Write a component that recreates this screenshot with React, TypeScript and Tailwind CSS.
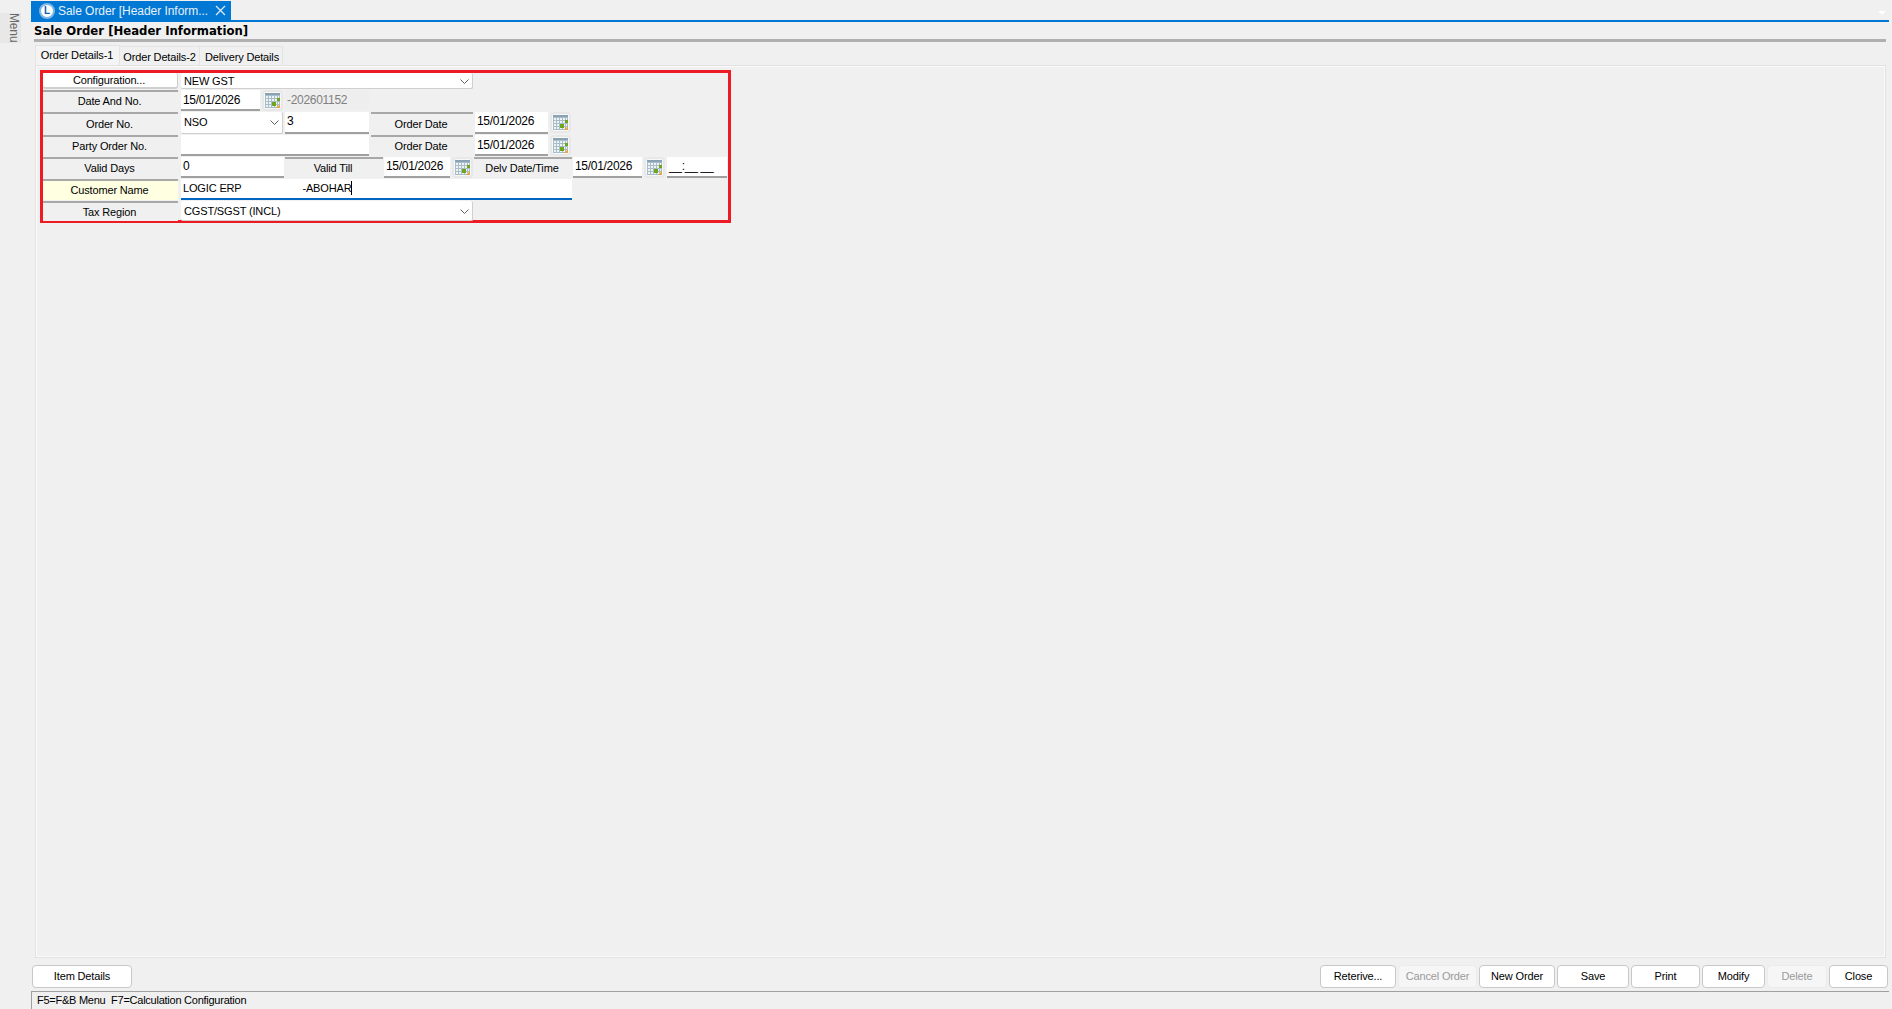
import React from "react";

function CalendarIcon() {
  return (
    <svg width="15" height="15" viewBox="0 0 15 15">
      <rect x="0.5" y="0.5" width="14" height="14" fill="#eef3f6" />
      <rect x="0" y="0" width="15" height="2" fill="#8aa3b2" />
      <path
        d="M0.5 2v13M3.5 2v13M6.5 2v13M9.5 2v13M12.5 2v13M14.5 2v13M0 2.5h15M0 5.5h15M0 8.5h15M0 11.5h15M0 14.5h15"
        stroke="#a9bdc9"
        strokeWidth="1"
        fill="none"
      />
      <rect x="7" y="9" width="4" height="4" fill="#6fa51a" />
      <rect x="12" y="5" width="3" height="3" fill="#6fa51a" />
      <path d="M11 15l4-4v4z" fill="#eda54a" />
    </svg>
  );
}

function CalButton() {
  return (
    <div className="w-[21px] h-[21px] shrink-0 flex items-center justify-center bg-[#f8f8f8] border-2 border-[#e8e8e8] rounded-[4px]">
      <CalendarIcon />
    </div>
  );
}

function Label({ text, w, yellow }: { text: string; w: string; yellow?: boolean }) {
  return (
    <div
      className={`${w} h-full shrink-0 flex items-center justify-center pr-[2px] border-t-2 border-[#a8a8a8] whitespace-nowrap ${
        yellow ? "bg-[#ffffe1]" : "bg-[#f0f0f0]"
      }`}
    >
      {text}
    </div>
  );
}

function Input({ text, w, muted, date, pt = "pt-[2px]" }: { text?: React.ReactNode; w: string; muted?: boolean; date?: boolean; pt?: string }) {
  return (
    <div
      className={`${w} ${pt} h-full shrink-0 flex items-start pl-[2px] border-b-2 whitespace-nowrap ${
        date ? "text-[12px] tracking-[-0.3px]" : ""
      } ${muted ? "bg-[#eeeeee] text-[#808080] border-[#f0f0f0]" : "bg-white border-[#a0a0a0]"}`}
    >
      {text}
    </div>
  );
}

function Select({ text, w, pt = "" }: { text: string; w: string; pt?: string }) {
  return (
    <div className={`${w} ${pt} h-full shrink-0 flex items-center justify-between pl-[3px] pr-[3px] bg-white border-b border-r border-[#cfcfcf] rounded-[2px] whitespace-nowrap`}>
      <span>{text}</span>
      <svg width="9" height="5" viewBox="0 0 9 5" fill="none">
        <path d="M0.5 0.5l4 4 4-4" stroke="#606060" strokeWidth="1" />
      </svg>
    </div>
  );
}

function Row({ h, mt, children }: { h: string; mt: string; children: React.ReactNode }) {
  return <div className={`flex ${h} ${mt}`}>{children}</div>;
}

function Btn({ text, w, disabled }: { text: string; w: string; disabled?: boolean }) {
  return (
    <div
      className={`${w} h-[23px] shrink-0 flex items-center justify-center rounded-[4px] border whitespace-nowrap ${
        disabled
          ? "bg-[#f6f6f6] border-[#ececec] text-[#9a9a9a]"
          : "bg-white border-[#c8c8c8] text-black"
      }`}
    >
      {text}
    </div>
  );
}

export default function App() {
  return (
    <div className="flex w-[1892px] h-[1009px] overflow-hidden bg-[#f0f0f0] text-black text-[11px] tracking-[-0.15px] leading-[15px] font-['Liberation_Sans',Arial,sans-serif]">
      {/* side menu */}
      <div className="w-[31px] shrink-0 pt-[13px]">
        <div className="w-[21px] h-[30px] bg-[#e8e8e8] flex justify-center text-[12px] text-[#6a6a6a] [writing-mode:vertical-rl]">
          Menu
        </div>
      </div>

      <div className="flex-1 flex flex-col min-w-0 pr-[3px]">
        {/* document tab */}
        <div className="relative h-[22px] pt-[1px] border-b-2 border-[#0078d4] shrink-0">
          <div className="w-[200px] h-[19px] bg-[#0078d4] flex items-center pl-[8px] text-white whitespace-nowrap">
            <div className="w-[16px] h-[16px] rounded-full bg-white border-2 border-[#7fb6e6] flex items-center justify-center text-[10px] font-bold text-[#0a5fb0] mr-[3px]">
              L
            </div>
            <span className="w-[157px] pt-[1px] text-[12px] tracking-[-0.05px] text-[#e6f1fb]">Sale Order [Header Inform...</span>
            <svg width="11" height="11" viewBox="0 0 11 11" fill="none">
              <path d="M1 1l9 9M10 1l-9 9" stroke="#dce9f5" strokeWidth="1.3" />
            </svg>
          </div>
          <div className="absolute right-[3px] top-[11px] w-0 h-0 border-x-[4px] border-x-transparent border-t-[4px] border-t-white" />
        </div>

        <div className="h-[17px] pl-[3px] pt-[3px] shrink-0 text-[11.7px] tracking-normal font-bold leading-[13px] font-['DejaVu_Sans',sans-serif] whitespace-nowrap">
          Sale Order [Header Information]
        </div>
        <div className="h-[3px] ml-[3px] mr-[3px] bg-[#b0b0b0] shrink-0" />

        {/* tabs */}
        <div className="flex mt-[4px] ml-[4px] h-[19px] shrink-0 whitespace-nowrap">
          <div className="w-[85px] h-[20px] -mt-[1px] pr-[1px] flex items-center justify-center bg-[#f4f4f4] border border-b-0 border-[#e4e4e4]">
            Order Details-1
          </div>
          <div className="w-[80px] h-[19px] pt-[2px] flex items-center justify-center bg-[#f0f0f0] border-r border-t border-[#e4e4e4]">
            Order Details-2
          </div>
          <div className="w-[83px] h-[19px] pt-[2px] pl-[2px] flex items-center justify-center bg-[#f0f0f0] border-r border-t border-[#e4e4e4]">
            Delivery Details
          </div>
        </div>

        {/* tab page */}
        <div className="flex-1 ml-[4px] mr-[3px] border border-[#e2e2e2] min-h-0">
          <div className="h-full border border-[#fafafa] pl-[3px] pt-[3px]">
            {/* red highlight round the form */}
            <div className="w-[691px] h-[153px] border-[3px] border-[#ed1c24] pr-[1px]">
              <Row h="h-[16px]" mt="mt-0">
                <div className="w-[135px] h-full shrink-0 flex items-center justify-center pt-[1px] pr-[2px] bg-white border-b-2 border-r border-[#cfcfcf] rounded-[3px]">
                  Configuration...
                </div>
                <div className="w-[3px]" />
                <Select text="NEW GST" w="w-[292px]" pt="pt-[1px]" />
              </Row>
              <Row h="h-[21px]" mt="mt-[1px]">
                <Label text="Date And No." w="w-[135px]" />
                <div className="w-[3px]" />
                <Input text="15/01/2026" w="w-[79px]" date pt="pt-[3px]" />
                <div className="w-[2px]" />
                <CalButton />
                <div className="w-[2px]" />
                <Input text="-202601152" w="w-[84px]" muted date pt="pt-[3px]" />
              </Row>
              <Row h="h-[22px]" mt="mt-[1px]">
                <Label text="Order No." w="w-[135px]" />
                <div className="w-[3px]" />
                <Select text="NSO" w="w-[102px]" />
                <div className="w-[2px]" />
                <Input text="3" w="w-[84px]" date />
                <div className="w-[2px]" />
                <Label text="Order Date" w="w-[102px]" />
                <div className="w-[2px]" />
                <Input text="15/01/2026" w="w-[73px]" date />
                <div className="w-[2px]" />
                <CalButton />
              </Row>
              <Row h="h-[21px]" mt="mt-[1px]">
                <Label text="Party Order No." w="w-[135px]" />
                <div className="w-[3px]" />
                <Input w="w-[188px]" />
                <div className="w-[2px]" />
                <Label text="Order Date" w="w-[102px]" />
                <div className="w-[2px]" />
                <Input text="15/01/2026" w="w-[73px]" date pt="pt-[3px]" />
                <div className="w-[2px]" />
                <CalButton />
              </Row>
              <Row h="h-[21px]" mt="mt-[1px]">
                <Label text="Valid Days" w="w-[135px]" />
                <div className="w-[3px]" />
                <Input text="0" w="w-[103px]" date />
                <div className="w-[1px]" />
                <Label text="Valid Till" w="w-[98px]" />
                <div className="w-[1px]" />
                <Input text="15/01/2026" w="w-[66px]" date />
                <div className="w-[2px]" />
                <CalButton />
                <div className="w-[1px]" />
                <Label text="Delv Date/Time" w="w-[98px]" />
                <div className="w-[1px]" />
                <Input text="15/01/2026" w="w-[69px]" date />
                <div className="w-[2px]" />
                <CalButton />
                <div className="w-[2px]" />
                <Input text="__:__ __" w="w-[60px]" date />
              </Row>
              <Row h="h-[21px]" mt="mt-[1px]">
                <Label text="Customer Name" w="w-[135px]" yellow />
                <div className="w-[3px]" />
                <div className="w-[391px] h-full flex items-start pl-[2px] pt-[2px] bg-white border-b-2 border-[#0066c0] whitespace-pre">
                  LOGIC ERP{"                     "}-ABOHAR
                  <span className="w-px h-[14px] bg-black" />
                </div>
              </Row>
              <Row h="h-[20px]" mt="mt-[1px]">
                <Label text="Tax Region" w="w-[135px]" />
                <div className="w-[3px]" />
                <Select text="CGST/SGST (INCL)" w="w-[292px]" pt="pt-[1px]" />
              </Row>
            </div>
          </div>
        </div>

        {/* action buttons */}
        <div className="flex justify-between items-start mt-[7px] ml-[1px] mr-[1px] h-[23px] shrink-0">
          <Btn text="Item Details" w="w-[100px]" />
          <div className="flex gap-[2px]">
            <Btn text="Reterive..." w="w-[76px]" />
            <Btn text="Cancel Order" w="w-[79px]" disabled />
            <Btn text="New Order" w="w-[76px]" />
            <Btn text="Save" w="w-[72px]" />
            <Btn text="Print" w="w-[69px]" />
            <Btn text="Modify" w="w-[63px]" />
            <Btn text="Delete" w="w-[60px]" disabled />
            <Btn text="Close" w="w-[59px]" />
          </div>
        </div>

        {/* status bar */}
        <div className="mt-[3px] h-[18px] shrink-0 border-t border-l border-[#a0a0a0] pl-[5px] pt-[1px] tracking-[-0.25px] whitespace-nowrap">
          F5=F&amp;B Menu&nbsp;&nbsp;F7=Calculation Configuration
        </div>
      </div>
    </div>
  );
}
